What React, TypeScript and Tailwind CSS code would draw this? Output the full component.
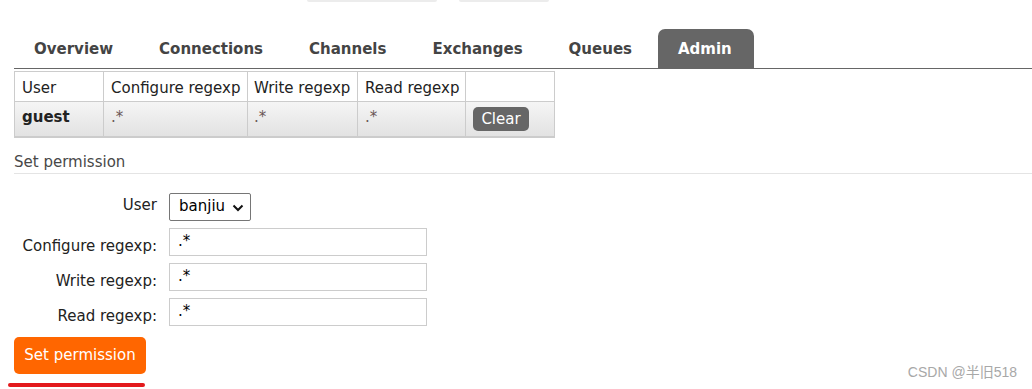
import React from "react";

const tabs = ["Overview", "Connections", "Channels", "Exchanges", "Queues"];

function FormRow({ label, children, labelPad = "pt-[5px]" }: { label: string; children: React.ReactNode; labelPad?: string }) {
  return (
    <div className="flex items-start">
      <div className={`w-[143px] text-right text-[15px] leading-[18px] text-[#222] whitespace-nowrap ${labelPad}`}>{label}</div>
      <div className="pl-3">{children}</div>
    </div>
  );
}

function RegexInput() {
  return (
    <div className="w-[258px] h-[28px] border border-[#cccccc] flex items-center pl-[8px] text-[15px] text-black">
      .*
    </div>
  );
}

export default function App() {
  return (
    <div className="relative w-[1032px] h-[389px] overflow-hidden bg-white font-['DejaVu_Sans',sans-serif] text-[#444]">
      {/* faint bits of the header above */}
      <div className="flex h-[2px]">
        <div className="ml-[307px] w-[130px] bg-[#ececec] rounded-b-[3px]" />
        <div className="ml-[22px] w-[90px] bg-[#ececec] rounded-b-[3px]" />
      </div>

      {/* tabs */}
      <div className="mt-[27px] ml-[14px] h-[40px] flex items-end gap-[6px] border-b border-[#666]">
        {tabs.map((t) => (
          <div key={t} className="h-[39px] px-5 pt-[2px] flex items-center text-[15px] font-bold text-[#444]">
            {t}
          </div>
        ))}
        <div className="h-[39px] w-[96px] px-5 pt-[2px] flex items-center text-[15px] font-bold text-white bg-[#666] rounded-t-[7px]">
          Admin
        </div>
      </div>

      {/* permissions table */}
      <table className="mt-[2px] ml-[14px] w-[540px] table-fixed border-collapse text-[15px] text-[#222] whitespace-nowrap">
        <colgroup>
          <col className="w-[89px]" />
          <col className="w-[144px]" />
          <col className="w-[110px]" />
          <col className="w-[108px]" />
          <col className="w-[89px]" />
        </colgroup>
        <thead>
          <tr className="h-[30px] bg-white">
            <th className="border border-[#cccccc] px-[7px] pt-[3px] text-left font-normal">User</th>
            <th className="border border-[#cccccc] px-[7px] pt-[3px] text-left font-normal">Configure regexp</th>
            <th className="border border-[#cccccc] px-[6px] pt-[3px] text-left font-normal">Write regexp</th>
            <th className="border border-[#cccccc] px-[7px] pt-[3px] text-left font-normal">Read regexp</th>
            <th className="border border-[#cccccc]" />
          </tr>
        </thead>
        <tbody>
          <tr className="h-[35px] bg-gradient-to-b from-[#f5f5f5] to-[#e2e2e2]">
            <td className="border border-[#cccccc] border-b-2 px-[7px] align-top pt-[4px] font-bold">guest</td>
            <td className="border border-[#cccccc] border-b-2 px-[7px] align-top pt-[4px] text-[#6b5656]">.*</td>
            <td className="border border-[#cccccc] border-b-2 px-[6px] align-top pt-[4px] text-[#6b5656]">.*</td>
            <td className="border border-[#cccccc] border-b-2 px-[7px] align-top pt-[4px] text-[#6b5656]">.*</td>
            <td className="border border-[#cccccc] border-b-2 px-[7px] align-middle">
              <div className="w-[56px] h-[24px] rounded-[5px] bg-[#666] text-white text-[15px] flex items-center justify-center">
                Clear
              </div>
            </td>
          </tr>
        </tbody>
      </table>

      {/* section heading */}
      <div className="mt-[16px] ml-[14px] pb-[2px] text-[15px] leading-[17px] text-[#484848] border-b border-[#e4e4e4]">
        Set permission
      </div>

      {/* form */}
      <div className="mt-[19px] ml-[14px] flex flex-col gap-[7px]">
        <FormRow label="User" labelPad="pt-[3px]">
          <div className="relative w-[82px] h-[28px] border border-[#767676] rounded-[2px] flex items-center pl-[9px] text-[15px] text-black">
            banjiu
            <svg className="absolute right-[6px] top-[10px]" width="12" height="8" viewBox="0 0 12 8">
              <path d="M1.5 1.5 L6 6 L10.5 1.5" fill="none" stroke="#111" strokeWidth="2" />
            </svg>
          </div>
        </FormRow>
        <FormRow label="Configure regexp:" labelPad="pt-[9px]">
          <RegexInput />
        </FormRow>
        <FormRow label="Write regexp:" labelPad="pt-[9px]">
          <RegexInput />
        </FormRow>
        <FormRow label="Read regexp:" labelPad="pt-[9px]">
          <RegexInput />
        </FormRow>
      </div>

      <div className="mt-[11px] ml-[14px] w-[132px] h-[37px] rounded-[5px] bg-[#ff6600] text-white text-[15px] flex items-center justify-center">
        Set permission
      </div>
      <div className="mt-[9px] ml-[8px] w-[137px] h-[4px] rounded-full bg-[#e3191c]" />

      <div className="absolute right-[15px] bottom-[6px] text-[14px] text-[#a8a8a8] font-['Liberation_Sans','Noto_Sans_CJK_SC',sans-serif]">
        CSDN @半旧518
      </div>
    </div>
  );
}
